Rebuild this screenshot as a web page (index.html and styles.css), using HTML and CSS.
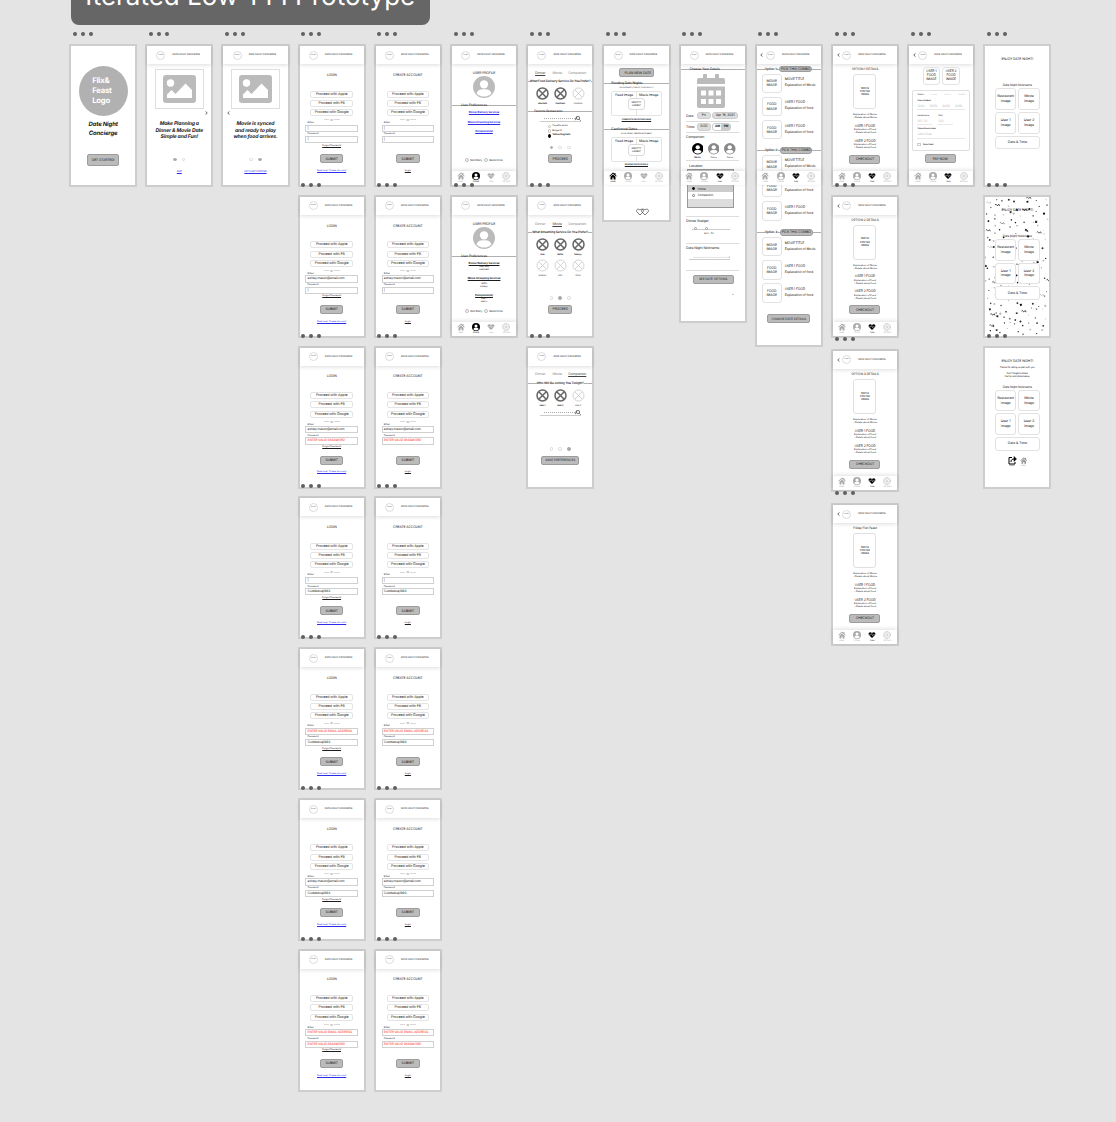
FILE: index.html
```html
<!DOCTYPE html>
<html lang="en">
<head>
<meta charset="utf-8">
<title>Iterated Low-FI Prototype</title>
<link rel="stylesheet" href="styles.css">
</head>
<body>
<h1 class="board-title">Iterated Low-FFI Prototype</h1>
<main class="board" id="board"></main>
<script src="app.js"></script>
</body>
</html>
```

FILE: styles.css
```css
* { box-sizing: border-box; }

body {
  margin: 0;
  width: 1116px;
  height: 1122px;
  overflow: hidden;
  background: #e4e4e4;
  color: #1c1c1c;
  font-family: Inter, "Liberation Sans", sans-serif;
  font-size: 3px;
  line-height: 4px;
  letter-spacing: -.03em;
  text-rendering: geometricPrecision;
}

svg { display: block; flex: none; }
p, h1, h2 { margin: 0; font-weight: 400; font-size: inherit; }

.board-title {
  width: 358.5px;
  height: 54.5px;
  margin: -30px 0 0 71px;
  border-radius: 8px;
  background: #666;
  color: #fff;
  font-size: 26px;
  line-height: 54px;
  letter-spacing: 0;
  text-align: center;
  white-space: nowrap;
}

.board { display: flex; align-items: flex-start; gap: 8px; padding: 19.6px 0 0 69px; }
.column { display: flex; flex-direction: column; gap: 7.9px; width: 68.2px; }
.column.loose { gap: 11.2px; }
.column.loose .frame:nth-child(2) { margin-top: -3.3px; }

/* Artboards */
.frame {
  position: relative;
  display: flex;
  flex-direction: column;
  align-items: center;
  width: 68.2px;
  height: 142.9px;
  border: 2px solid #cdcdcd;
  background: #fff;
  text-align: center;
  white-space: nowrap;
}
.frame > * { flex: none; letter-spacing: -.03em; }
.frame.h178 { height: 178px; }
.frame.h279 { height: 279px; }
.frame.h303 { height: 303px; }
.more { position: absolute; z-index: 5; top: -14px; left: 1.7px; display: flex; gap: 4px; }
.more i { width: 4px; height: 4px; border-radius: 50%; background: #606060; }

.bar {
  display: flex;
  align-items: center;
  width: 100%;
  height: 18px;
  background: #fff;
  box-shadow: 0 1px 4px rgba(0,0,0,.14);
  color: #333;
  font-size: 2.4px;
}
.bar .back { display: flex; justify-content: center; width: 9.3px; padding-left: 1px; }
.logo { width: 9px; height: 9px; border: 1px solid #dcdcdc; border-radius: 50%; font-size: 1.8px; line-height: 7px; }
.bar .name { margin-left: 7px; }

.btn {
  display: flex;
  align-items: center;
  justify-content: center;
  height: 9px;
  padding: 0 5px;
  border: 1px solid #9c9c9c;
  border-radius: 2px;
  background: #bbb;
  font-size: 3.4px;
}
.link { color: #2a2ae8; text-decoration: underline; text-decoration-thickness: .3px; }
.u { text-decoration: underline; text-decoration-thickness: .3px; }

.tabbar {
  position: absolute;
  z-index: 3;
  top: 124.7px;
  left: 0;
  display: flex;
  width: 64.2px;
  height: 14.3px;
  padding: 1.6px 2px 0 1px;
  border-radius: 0 0 3px 3px;
  background: #fff;
  box-shadow: 0 -1px 4px rgba(0,0,0,.13);
  color: #aaa;
}
.tabbar div { display: flex; flex: 1; flex-direction: column; align-items: center; font-size: 1.7px; line-height: 3px; }
.tabbar svg { width: 8px; height: 8px; margin-bottom: .8px; }
.tabbar .on { color: #000; }

.rule { display: flex; align-items: center; width: 100%; height: 4px; padding-left: 9px; background: linear-gradient(#b0b0b0, #b0b0b0) 0 2px / 100% 1px no-repeat; font-size: 3.4px; }
.details { margin-top: 3px; }

/* Onboarding */
.brand { display: flex; align-items: center; width: 49px; height: 50px; margin-top: 19.6px; padding-left: 13.6px; border-radius: 50%; background: #b1b1b1; color: #fff; font-weight: 700; font-size: 7.7px; line-height: 10.1px; text-align: left; }
.tagline { margin-top: 4px; font-size: 6px; font-weight: 700; font-style: italic; line-height: 9px; }
.start { width: 31.5px; height: 11.5px; margin-top: 16.5px; padding: 0; font-size: 3.4px; }
.photo { display: flex; align-items: center; justify-content: center; width: 49px; height: 40px; margin-top: 5px; border: 1px solid #dedede; }
.photo svg { width: 33px; height: 28px; }
.chev { align-self: flex-end; margin: 2px 3px 0; }
.chev.l { align-self: flex-start; margin-left: 3.5px; }
.pitch { margin-top: 6px; font-size: 5.1px; line-height: 6.5px; font-weight: 700; font-style: italic; }
.pager { display: flex; gap: 5px; }
.pager i { width: 3.6px; height: 3.6px; border: 1px solid #d8d8d8; border-radius: 50%; }
.pager .on { border-color: #aaa; background: #aaa; }
.pitch + .pager { margin-top: 17px; }
.skip { margin-top: 8.9px; font-size: 2.4px; }

/* Login and sign-up */
.head { margin-top: 8.7px; font-size: 3.4px; }
.providers { display: flex; flex-direction: column; gap: 2.2px; width: 42.5px; margin-top: 13.8px; }
.providers p { height: 7px; border: 1px solid #e4e4e4; border-radius: 2px; font-size: 3.6px; line-height: 5.2px; }
.or { display: flex; align-items: center; gap: 1px; width: 16px; height: 4px; margin-top: 2px; color: #777; font-size: 2.7px; }
.or::before, .or::after { content: ""; flex: 1; height: 1px; background: #d8d8d8; }
.label { align-self: flex-start; height: 2.6px; margin-left: 8px; font-size: 2.5px; line-height: 2.6px; }
.field { width: 52.7px; height: 7.2px; padding-left: 1.3px; border: 1px solid #d0d0d0; font-size: 3.2px; line-height: 5.4px; text-align: left; }
.field + .label { margin-top: 1.6px; }
.field.bad { color: #f22; }
.forgot { height: 3px; margin-top: .6px; font-size: 2.5px; line-height: 3px; }
.submit { margin-top: 7.3px; width: 23.5px; }
.alt { margin-top: 5.9px; font-size: 2.5px; }

/* Profile */
.title { margin-top: 6.7px; font-size: 3.4px; }
.avatar { width: 22px; height: 22px; margin-top: 1px; color: #bbb; }
.avatar + .rule { margin-top: 5px; }
.links { display: flex; flex-direction: column; gap: 5.6px; height: 47px; margin-top: 3.2px; font-size: 2.7px; font-weight: 700; }
.prefs { height: 47px; margin-top: 3.6px; font-size: 2.2px; line-height: 2.9px; }
.prefs b { display: block; margin-bottom: .5px; font-size: 2.7px; line-height: 4px; text-decoration: underline; text-decoration-thickness: .3px; }
.prefs p + b { margin-top: 4.4px; }
.checks { display: flex; gap: 2px; margin-top: 1px; font-size: 2.7px; }
.checks span, .choices p { display: flex; align-items: center; gap: 1px; }
.checks i { width: 4px; height: 4px; border: 1px solid #bbb; border-radius: 50%; }

/* Preference steps */
.steps { display: grid; grid-template-columns: 16px 18px 22px; margin-top: 6.7px; color: #888; font-size: 3.5px; }
.steps .on { color: #444; text-decoration: underline; text-decoration-thickness: .3px; }
.ask { width: 100%; margin-top: 4.3px; background: linear-gradient(#b0b0b0, #b0b0b0) 0 2px / 100% 1px no-repeat; font-size: 3.1px; font-weight: 600; }
.ask span { background: #fff; }
.slots { display: grid; grid-template-columns: repeat(3, 17.8px); justify-items: center; margin-top: 4.3px; font-size: 2.1px; font-weight: 700; }
.slots svg { width: 13px; height: 13px; margin: 0 auto 1.8px; color: #666; }
.slots div { height: 21.3px; }
.slots .off svg { color: #c4c4c4; }
.slots .off { color: #777; }
.fav { margin-top: .4px; padding-left: 6px; font-size: 3.1px; }
.search { display: flex; align-items: center; justify-content: flex-end; width: 41px; height: 5px; margin-top: 3.8px; border-bottom: 1px solid #ccc; }
.search::before { content: ""; flex: 1; margin-left: 4px; border-top: 1px dotted #aaa; }
.slots + .search { margin-top: .5px; }
.choices { height: 15px; margin-top: 2.2px; width: 25px; font-size: 2.5px; line-height: 4.7px; }
.choices p { height: 4.7px; }
.choices i { width: 3.5px; height: 3.5px; border: 1px solid #bbb; border-radius: 50%; }
.choices .on { font-weight: 700; }
.choices .on i { border-color: #000; background: #000; }
.body { display: flex; flex-direction: column; align-items: center; width: 100%; height: 82px; }
.body > * { flex: none; }
.body + .pager { margin-top: -.4px; }
.pager + .btn { margin-top: 4.8px; padding: 0; width: 24px; }
.pager + .btn.wide { width: 38.5px; font-size: 3.2px; }

/* Planner */
.plan { margin-top: 4px; width: 35px; padding: 0 0 0 3px; font-size: 3.5px; }
.plan + .rule { margin-top: 3.8px; }
.h178 .rule { padding-left: 7px; font-weight: 500; }
.small { height: 3px; font-size: 2.2px; line-height: 3px; }
.rule + .small { margin-top: 1px; }
.night { position: relative; display: grid; grid-template-columns: 1fr 1fr; width: 51px; height: 25.3px; margin-top: 1.8px; padding-top: 1.2px; border: 1px solid #e4e4e4; border-radius: 2px; background: linear-gradient(#e4e4e4, #e4e4e4) 24px 0 / 1px 100% no-repeat; font-size: 3.4px; }
.night div { position: absolute; top: 6.5px; left: 16px; width: 17px; height: 12px; padding-top: 2px; border: 1px solid #dadada; border-radius: 3px; background: #fff; font-size: 2.4px; line-height: 3px; }
.night + .small { margin-top: 1.6px; font-weight: 700; }
.small + .rule { margin-top: 6.2px; }
.hearts { width: 13px; height: 8px; margin: 42px 0 0 13px; }

/* Date details */
.form { display: flex; flex-direction: column; width: 53px; text-align: left; font-size: 3.5px; }
.form > * { flex: none; }
.cal { width: 28px; height: 34px; margin: 3px 4px 0 0; }
.line { display: flex; align-items: center; gap: 1.5px; height: 11.6px; border-bottom: 1px solid #ddd; }
.cal + .form .line:first-child { height: 13.7px; padding-top: 2.5px; }
.line span { width: 9.3px; }
.pill { width: 13.8px; height: 7.2px; border: 1px solid #ccc; border-radius: 3px; background: #ddd; line-height: 5.4px; text-align: center; }
.pill.w26 { width: 26px; }
.pill.half { display: grid; grid-template-columns: 1fr 1fr; width: 19px; background: linear-gradient(90deg, #fff 50%, #ccc 50%); font-size: 3px; }
.caption { margin-top: 2px; }
.people { display: flex; justify-content: space-between; width: 44px; margin: 4px 0 0 5.5px; font-size: 2.4px; line-height: 4px; text-align: center; color: #333; }
.people svg { width: 11.5px; height: 11.5px; margin-bottom: 1px; color: #888; }
.people .on { font-weight: 700; }
.people .on svg { color: #000; }
.loc { padding: 2.8px 0 0 3px; border-top: 1px solid #ddd; }
.select { width: 47px; height: 39px; margin: 1.2px 0 0 1.2px; padding-top: 15.5px; border: 1px solid #999; background: linear-gradient(#ccc 22.5px, #ddd 22.5px); font-size: 3px; }
.select p { display: flex; align-items: center; gap: 2.5px; height: 6.6px; padding-left: 4px; }
.select p + p { background: #fff; }
.select i { width: 3px; height: 3px; border: 1px solid #777; border-radius: 50%; }
.select .on i { border-color: #000; background: #000; }
.block { height: 27px; padding-top: 2px; border-top: 1px solid #ddd; }
.select + .block { margin-top: 8px; }
.slider { display: flex; gap: 8px; align-items: center; width: 37.5px; height: 4px; margin: 4px 0 0 6px; padding-left: 2px; background: linear-gradient(#ccc, #ccc) 0 2px / 100% 1px no-repeat; }
.slider i { width: 3px; height: 3px; border: 1px solid #999; border-radius: 50%; background: #fff; }
.value { margin: 1.5px 0 0 18px; font-size: 2.5px; }
.entry { width: 41px; height: 5px; margin: 5.5px 0 0 3px; padding-left: 4px; border-bottom: 1px solid #ccc; font-size: 3px; line-height: 4px; }
.form .options { width: 41px; margin: 2px 0 0 6.5px; padding: 0; font-size: 3.2px; }
.plus { margin: 9.5px 0 0 46px; font-size: 2.5px; }

/* Combos */
.combo { width: 100%; height: 82.2px; }
.bar + .combo { margin-top: 3px; height: 81.2px; }
.combo .rule { gap: 2px; padding-left: 8px; font-size: 3.2px; font-weight: 600; }
.combo .rule span { background: #fff; }
.combo .btn { height: 6.6px; width: 32.5px; padding: 0; border-radius: 3px; font-weight: 400; font-size: 3.4px; flex: none; }
.dish { display: flex; gap: 3px; height: 23.2px; margin-left: 5px; text-align: left; }
.rule + .dish { margin-top: 2.6px; }
.tile { display: flex; align-items: center; justify-content: center; width: 20px; height: 19.4px; border: 1px solid #e2e2e2; border-radius: 3px; background: #fff; font-size: 3.4px; line-height: 4.2px; text-align: center; }
.dish div + div { padding-top: 2.6px; font-size: 3.3px; line-height: 6px; }
.change { width: 43px; margin-top: 1.6px; padding: 0; font-size: 3.2px; }

/* Option details */
.option { margin-top: 2.7px; font-size: 3.2px; }
.poster { display: flex; align-items: center; justify-content: center; width: 23px; height: 34.5px; margin-top: 3.6px; border: 1px solid #e0e0e0; border-radius: 3px; font-size: 2.6px; line-height: 3.3px; }
.detail { font-size: 2.5px; line-height: 2.8px; }
.poster + .detail { margin-top: 5.2px; }
.detail b { display: block; margin-top: 4px; font-size: 3.3px; font-weight: 400; line-height: 5.4px; }
.checkout { width: 31px; margin-top: 5px; padding: 0; }

/* Payment */
.meals { display: flex; gap: 2.4px; margin-top: 3.2px; }
.meals .tile { width: 17.3px; height: 17.5px; font-size: 3.3px; line-height: 3.7px; }
.card { display: flex; flex-direction: column; width: 57.4px; height: 61px; margin-top: 5px; padding: 1.8px 4px 0; border: 1px solid #dedede; border-radius: 2px; text-align: left; font-size: 1.9px; }
.card .kinds { display: flex; justify-content: space-between; color: #bbb; }
.card .kinds b { color: #555; }
.card label { height: 3px; margin-top: 3.5px; font-weight: 600; line-height: 3px; }
.card .val { display: flex; gap: 5px; height: 7.2px; border-bottom: 1px solid #e8e8e8; color: #bbb; font-size: 3.2px; line-height: 6px; }
.card .short { width: 15px; }
.card .pair { display: flex; gap: 6px; margin-top: 1px; }
.card .pair label { display: block; }
.card .save { display: flex; align-items: center; gap: 2px; margin-top: 4px; }
.card .save i { width: 3.5px; height: 3.5px; border: 1px solid #ccc; }
.pay { width: 31px; margin: 3.4px 2px 0 0; padding: 0; }

/* Confirmation */
.enjoy { position: relative; margin-top: 11.4px; font-size: 3.4px; }
.thanks { height: 21.9px; padding-top: 3px; font-size: 2.3px; line-height: 3.1px; }
.thanks p + p { margin-top: 3px; }
.nick { position: relative; height: 4px; font-size: 3.1px; }
.grid { position: relative; display: grid; grid-template-columns: 21.3px 21.3px; grid-auto-rows: 21.7px; gap: 2px; margin-top: .8px; }
.grid .tile { width: auto; height: auto; font-size: 3.5px; line-height: 4.8px; }
.grid .tile:last-child { grid-column: span 2; height: 13.4px; }
.confetti { position: absolute; inset: 0; width: 100%; height: 100%; }
.share { display: flex; gap: 3px; margin-top: -3.3px; font-size: 1.6px; line-height: 2.5px; }
.share svg { width: 9px; height: 9px; }
.share div + div { color: #999; }
.share div + div svg { width: 7.5px; margin: 0; }
```

FILE: app.js
```js
const icon = {
  home: '<svg viewBox="0 0 16 16" fill="currentColor"><path d="M8 1 .5 7.800l1.200 1.300L8 3.500l6.300 5.600 1.200-1.300L13 5.500V2h-2v1.700zM8 5 3 9.400V15h3.800v-4h2.400v4H13V9.400z"/></svg>',
  user: '<svg viewBox="0 0 24 24"><circle cx="12" cy="12" r="12" fill="currentColor"/><circle cx="12" cy="9" r="4.500" fill="#fff"/><path d="M4 19c1-4 4-4.500 8-4.500s7 .5 8 4.500a11 11 0 0 1-16 0z" fill="#fff"/></svg>',
  heart: '<svg viewBox="0 0 16 16"><path d="M8 14 2 8C-.5 5 3 .5 8 4c5-3.500 8.500 1 6 4z" fill="currentColor"/><path d="M2 7.500h4L7.500 5 9 9.500l1-2h4" fill="none" stroke="#fff" stroke-width=".8"/></svg>',
  gear: '<svg viewBox="0 0 16 16" fill="none" stroke="currentColor"><circle cx="8" cy="8" r="7" stroke-width="1.200" stroke-dasharray="3 1"/><circle cx="8" cy="8" r="5" stroke-width=".7"/><circle cx="8" cy="8" r="2"/></svg>',
  photo: '<svg viewBox="0 0 33 28"><rect width="33" height="28" rx="3" fill="#bbb"/><circle cx="7.500" cy="8" r="3.700" fill="#fff"/><path d="M4 23v-3.500l4.500-4.500 4 4L22.500 8.500 29 15v8z" fill="#fff"/></svg>',
  cross: '<svg viewBox="0 0 26 26" fill="none" stroke="currentColor" stroke-width="W"><circle cx="13" cy="13" r="11"/><path d="m6 6 14 14M20 6 6 20"/></svg>',
  search: '<svg width="6" height="5" viewBox="0 0 6 5" fill="none" stroke="#555" stroke-width=".8"><circle cx="3" cy="2" r="1.600"/><path d="m4.200 3.200 1.600 1.600M.3 4.200 1.500.5"/></svg>',
  left: '<svg width="3" height="4" viewBox="0 0 3 4" fill="none" stroke="#222" stroke-width=".7"><path d="M2.300.4.800 2l1.500 1.600"/></svg>',
  right: '<svg width="3" height="4" viewBox="0 0 3 4" fill="none" stroke="#222" stroke-width=".7"><path d="M.7.4 2.200 2 .7 3.600"/></svg>',
  calendar: '<svg class="cal" viewBox="0 0 28 34"><path d="M2 4h4V1q0-1 1-1h2q1 0 1 1v3h8V1q0-1 1-1h2q1 0 1 1v3h4q2 0 2 2v4H0V6q0-2 2-2zM0 12.500h28V32q0 2-2 2H2q-2 0-2-2z" fill="#bbb"/><path d="M4 16.500h5v5H4zm7.500 0h5v5h-5zm7.500 0h5v5h-5zM4 25h5v5H4zm7.500 0h5v5h-5zm7.500 0h5v5h-5z" fill="#fff"/></svg>',
  hearts: '<svg class="hearts" viewBox="0 0 13 8" fill="none" stroke="#444" stroke-width=".7"><path d="M4 7 1 4C-.5 2 2 0 4 2c2-2 4.500 0 3 2zM9 7 6 4c-1.500-2 1-4 3-2 2-2 4.500 0 3 2z"/></svg>',
  share: '<svg viewBox="0 0 18 18" fill="none" stroke="#000" stroke-width="2"><path d="M8 3H2v13h12v-4M6 12c0-5 3-6 6-6"/><path d="m12 1 5 5-5 5z" fill="#000" stroke-width="1"/></svg>'
};

const frame = (content, size = '') => `<section class="frame ${size}"><div class="more"><i></i><i></i><i></i></div>${content}</section>`;
const bar = (back = false) => `<header class="bar"><div class="back">${back ? icon.left : ''}</div><div class="logo">LOGO</div><div class="name">DATE NIGHT CONCIERGE</div></header>`;
const tabbar = active => '<nav class="tabbar">' +
  [['home', 'HOME'], ['user', 'PROFILE'], ['heart', 'PLAN'], ['gear', 'SETTINGS']]
    .map(([name, text]) => `<div class="${name === active ? 'on' : ''}">${icon[name]}${text}</div>`).join('') + '</nav>';
const pager = (count, active) => '<div class="pager">' +
  Array.from({ length: count }, (_, i) => `<i class="${i === active ? 'on' : ''}"></i>`).join('') + '</div>';
const tile = text => `<div class="tile"><span>${text}</span></div>`;

const welcome = frame('<div class="brand">Flix&amp;<br>Feast<br>Logo</div><h2 class="tagline">Date Night<br>Concierge</h2><div class="btn start">GET STARTED!</div>');
const intro = (text, step, link) => frame(`${bar()}<div class="photo">${icon.photo}</div>
  <div class="chev ${step ? 'l' : ''}">${step ? icon.left : icon.right}</div>
  <p class="pitch">${text}</p>${pager(2, step)}<p class="skip link">${link}</p>`);

const badEmail = 'ENTER VALID EMAIL ADDRESS';
const badPassword = 'ENTER VALID PASSWORD';
const field = value => `<div class="field ${value.startsWith('ENTER') ? 'bad' : ''}">${value}</div>`;
const account = (isLogin, email, password) => frame(`${bar()}<h2 class="head">${isLogin ? 'LOGIN' : 'CREATE ACCOUNT'}</h2>
  <div class="providers"><p>Proceed with Apple</p><p>Proceed with FB</p><p>Proceed with Google</p></div>
  <div class="or">Or</div>
  <div class="label">Email</div>${field(email)}
  <div class="label">Password</div>${field(password)}
  <p class="forgot u">${isLogin ? 'Forgot Password' : ''}</p>
  <div class="btn submit">SUBMIT</div>
  <p class="alt ${isLogin ? 'link' : 'u'}">${isLogin ? 'New user, Create Account' : 'Login'}</p>`);
const states = [
  ['|', '|'], ['ashley.mason@email.com', '|'], ['ashley.mason@email.com', badPassword],
  ['|', 'Cuddlebug1993'], [badEmail, 'Cuddlebug1993'],
  ['ashley.mason@email.com', 'Cuddlebug1993'], [badEmail, badPassword]
];

const profile = content => frame(`${bar()}<h2 class="title">USER PROFILE</h2><div class="avatar">${icon.user}</div>
  <div class="rule">User Preferences</div>${content}
  <div class="checks"><span><i></i>Non Dairy</span><span><i></i>Gluten Free</span></div>${tabbar('user')}`);
const slots = list => '<div class="slots">' + list.map(([text, on]) =>
  `<div class="${on ? '' : 'off'}">${icon.cross.replace('"W"', on ? '"3"' : '"1.500"')}${text}</div>`).join('') + '</div>';
const step = (index, question, content, button) => frame(`${bar()}<div class="body"><div class="steps">
  ${['Dinner', 'Movie', 'Companion'].map((t, i) => `<span class="${i === index ? 'on' : ''}">${t}</span>`).join('')}</div>
  <p class="ask"><span>${question}</span></p>${content}</div>${pager(3, index)}
  <div class="btn ${index === 2 ? 'wide' : ''}">${button}</div>`);
const search = `<div class="search">${icon.search}</div>`;

const night = (title, note, action) => `<div class="rule">${title}</div><p class="small">${note}</p>
  <div class="night"><span>Food Image</span><span>Movie Image</span><div>SMUTTY<br>LADIES?</div></div><p class="small u">${action}</p>`;
const planner = frame(`${bar()}<div class="btn plan">PLAN NEW DATE</div>
  ${night('Pending Date Nights', 'DATE NIGHT (FRIDAY FISH FEAST)', 'COMPLETE DATE PURCHASE')}
  ${night('Confirmed Dates', 'DATE NIGHT (BRUNCH IN BED)', 'REVIEW DATE DETAILS')}
  ${icon.hearts}${tabbar('home')}`, 'h178');

const details = frame(`${bar()}<div class="rule details">Choose Your Details</div>${icon.calendar}
  <div class="form">
    <div class="line"><span>Date</span><div class="pill">Fri</div><div class="pill w26">Apr 16, 2021</div></div>
    <div class="line"><span>Time:</span><div class="pill">8:00</div><div class="pill half"><b>AM</b><b>PM</b></div></div>
    <div class="caption">Companion</div>
    <div class="people"><div class="on">${icon.user}Name</div><div>${icon.user}Name</div><div>${icon.user}Name</div></div>
    <div class="loc">Location</div>
    <div class="select"><p class="on"><i></i>Home</p><p><i></i>Companion</p></div>
    <div class="block">Dinner Budget<div class="slider"><i></i><i></i></div><div class="value">$30 - 50</div></div>
    <div class="block">Date Night Nickname<div class="entry">----------------------------/</div></div>
    <div class="block"><div class="btn options">SEE DATE OPTIONS</div><div class="plus">+</div></div>
  </div>${tabbar('heart')}`, 'h279');

const dish = (image, title, text) => `<div class="dish">${tile(image + '<br>IMAGE')}<div>${title}<br>Explanation of ${text}</div></div>`;
const combo = n => `<div class="combo"><div class="rule"><span>Option ${n}:</span><div class="btn">PICK THIS COMBO</div></div>
  ${dish('MOVIE', 'MOVIE TITLE', 'Movie')}${dish('FOOD', 'USER 1 FOOD', 'food')}${dish('FOOD', 'USER 1 FOOD', 'food')}</div>`;
const combos = frame(`${bar(true)}${combo(1)}${combo(2)}${combo(3)}<div class="btn change">CHANGE DATE DETAILS</div>${tabbar('heart')}`, 'h303');

const option = title => frame(`${bar(true)}<h2 class="option">${title}</h2><div class="poster">MOVIE<br>POSTER<br>IMAGE</div>
  <div class="detail">Explanation of Movie<br>- Details about Movie
  <b>USER 1 FOOD</b>Explanation of Food<br>- Details about food
  <b>USER 2 FOOD</b>Explanation of Food<br>- Details about food</div>
  <div class="btn checkout">CHECKOUT</div>${tabbar('heart')}`);

const payment = frame(`${bar(true)}<div class="meals">${tile('USER 1<br>FOOD<br>IMAGE')}${tile('USER 2<br>FOOD<br>IMAGE')}</div>
  <div class="card"><div class="kinds"><b>CREDIT</b><span>APPLE</span><span>PAYPAL</span><span>VENMO</span></div>
    <label>CARD NUMBER</label><div class="val"><span>1234</span><span>5678</span><span>3456</span><span>2456</span></div>
    <div class="pair"><div><label>EXPIRY DATE</label><div class="val short">05 / 21</div></div><div><label>CVV</label><div class="val short">123</div></div></div>
    <label>CARDHOLDER NAME</label><div class="val">John Doe</div>
    <div class="save"><i></i><b>SAVE CARD</b></div></div>
  <div class="btn pay">PAY NOW</div>${tabbar('heart')}`);

// Scatter the pieces on a jittered grid so that they cover the artboard evenly.
function confetti() {
  let seed = 7;
  const next = max => {
    seed = (seed * 1664525 + 1013904223) % 4294967296;
    return seed / 4294967296 * max;
  };
  const shades = ['#111', '#333', '#777', '#bbb'];
  let shapes = '';
  for (let row = 0; row < 20; row++) {
    for (let col = 0; col < 9; col++) {
      const x = (col * 7.100 + next(6)).toFixed(1), y = (row * 6.900 + next(6)).toFixed(1);
      const size = .8 + next(1.400), shade = shades[Math.floor(next(4))], kind = next(6);
      if (kind < 1) shapes += `<path d="M${x} ${y}q1-1.500 1.500 0t1.500 0t1.500 1" fill="none" stroke="${shade}" stroke-width=".8"/>`;
      else if (kind < 3.500) shapes += `<circle cx="${x}" cy="${y}" r="${(size / 2).toFixed(1)}" fill="${shade}"/>`;
      else shapes += `<rect x="${x}" y="${y}" width="${size.toFixed(1)}" height="${size.toFixed(1)}" fill="${shade}" transform="rotate(${next(90).toFixed()} ${x} ${y})"/>`;
    }
  }
  return `<svg class="confetti" viewBox="0 0 64.2 138.900">${shapes}</svg>`;
}
const enjoy = (background, thanks, share) => frame(`${background}<h2 class="enjoy">ENJOY DATE NIGHT!</h2><div class="thanks">${thanks}</div>
  <p class="nick">Date Night Nickname</p>
  <div class="grid">${tile('Restaurant<br>Image')}${tile('Movie<br>Image')}${tile('User 1<br>Image')}${tile('User 2<br>Image')}${tile('Date &amp; Time')}</div>${share}`);

const columns = [
  [welcome],
  [intro('Make Planning a<br>Dinner &amp; Movie Date<br>Simple and Fun!', 0, 'SKIP')],
  [intro('Movie is synced<br>and ready to play<br>when food arrives.', 1, 'LET\'S GET STARTED')],
  states.map(([email, password]) => account(true, email, password)),
  states.map(([email, password]) => account(false, email, password)),
  [
    profile('<div class="links"><span class="link">Dinner Delivery Services</span><span class="link">Movie Streaming Services</span><span class="link">Companion(s)</span></div>'),
    profile('<div class="prefs"><b>Dinner Delivery Services</b><p>Uber Eats<br>DoorDash</p><b>Movie Streaming Services</b><p>Hulu<br>Netflix<br>Disney+</p><b>Companion(s)</b><p>User 1<br>User 2</p></div>')
  ],
  [
    step(0, 'What Food Delivery Service Do You Prefer?', slots([['Uber Eats', 1], ['DoorDash', 1], ['GrubHub', 0]]) +
      `<div class="rule fav">Favorite Restaurants</div>${search}<div class="choices"><p><i></i>Toyama Sushi</p><p><i></i>Burger Fi</p><p class="on"><i></i>Yellow Dog Eats</p></div>`, 'PROCEED'),
    step(1, 'What Streaming Service Do You Prefer?', slots([['Hulu', 1], ['Netflix', 1], ['Disney+', 1], ['Amazon', 0], ['HBO', 0], ['Other', 0]]), 'PROCEED'),
    step(2, 'Who Will Be Joining You Tonight?', slots([['User 1', 1], ['User 2', 1], ['User 3', 0]]) + search, 'SAVE PREFERENCES')
  ],
  [planner], [details], [combos],
  [option('OPTION 1 DETAILS'), option('OPTION 2 DETAILS'), option('OPTION 3 DETAILS'), option('Friday Fish Feast')],
  [payment],
  [
    enjoy('', '', ''),
    enjoy(confetti(), '', ''),
    enjoy('', '<p>Thanks for letting us plan with you.</p><p>Don\'t forget to share<br>the fun and photo below.</p>',
      `<div class="share"><div>${icon.share}SHARE</div><div>${icon.home}HOME</div></div>`)
  ]
];
document.getElementById('board').innerHTML = columns
  .map((frames, i) => `<div class="column ${i === 10 ? 'loose' : ''}">${frames.join('')}</div>`).join('');
```
